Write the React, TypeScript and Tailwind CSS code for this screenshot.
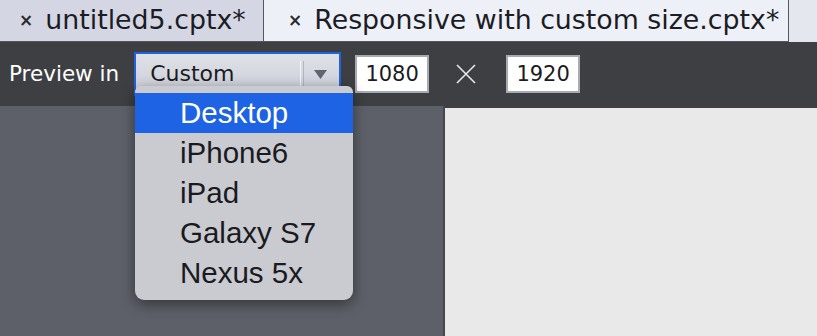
import { useState } from "react";

const DEVICES = ["Desktop", "iPhone6", "iPad", "Galaxy S7", "Nexus 5x"];

const ui = { fontFamily: '"DejaVu Sans", Verdana, sans-serif' };
const menuFont = { fontFamily: '"Liberation Sans", Arial, sans-serif' };

function Tab({ title, active, className }: { title: string; active?: boolean; className?: string }) {
  return (
    <div
      className={`flex items-center h-full border-b border-[#3a3b40] ${
        active ? "bg-[#eef0f7] border-r border-[#55575e]" : "bg-[#d4d7e3] border-r border-[#55575e]"
      } ${className ?? ""}`}
    >
      <span className="text-[17px] font-bold text-[#2a2a2a] leading-none mr-[12px]">×</span>
      <span className="text-[26.8px] leading-none text-[#1c1c24]">{title}</span>
    </div>
  );
}

export default function App() {
  const [selected] = useState(0);

  return (
    <div className="relative w-[817px] h-[336px] flex flex-col overflow-hidden bg-[#3e3f43]" style={ui}>
      {/* tab strip */}
      <div className="flex h-[42px] bg-[#e5e7ee]">
        <Tab title="untitled5.cptx*" className="w-[264px] pl-[19px]" />
        <Tab title="Responsive with custom size.cptx*" active className="w-[525px] pl-[24px]" />
        <div className="flex-1" />
      </div>

      {/* toolbar */}
      <div className="flex items-center h-[64px] bg-[#3e3f43] pl-[9px]">
        <span className="text-[21.5px] text-white leading-none">Preview in</span>
        <div className="ml-[15px] w-[207px] h-[44px] border-2 border-[#2262dc] bg-gradient-to-b from-[#dfe1e8] to-[#cbced7] flex items-center">
          <span className="ml-[14px] text-[22px] leading-none text-[#1b1b22]">Custom</span>
          <div className="ml-auto h-full flex items-center">
            <div className="w-[1px] h-[26px] bg-[#f3f4f7]" />
            <div className="w-[1px] h-[26px] bg-[#b3b6bf] ml-[2px]" />
            <svg width="13" height="9" viewBox="0 0 13 9" className="ml-[10px] mr-[12px]">
              <path d="M0 0 L13 0 L6.5 9 Z" fill="#5f6470" />
            </svg>
          </div>
        </div>
        <div className="ml-[14px] w-[74px] h-[38px] bg-white border-2 border-[#a9abb2] flex items-center justify-center">
          <span className="text-[21px] leading-none text-[#1b1b22]">1080</span>
        </div>
        <svg width="22" height="22" viewBox="0 0 22 22" className="ml-[26px]">
          <path d="M2 2 L20 20 M20 2 L2 20" stroke="#e8e8ea" strokeWidth="1.6" />
        </svg>
        <div className="ml-[29px] w-[74px] h-[38px] bg-white border-2 border-[#a9abb2] flex items-center justify-center">
          <span className="text-[21px] leading-none text-[#1b1b22]">1920</span>
        </div>
      </div>

      {/* panels */}
      <div className="flex flex-1">
        <div className="w-[443px] bg-[#5d6068]" />
        <div className="w-[2px] bg-[#46484e]" />
        <div className="flex-1 bg-[#e9e9e9] mt-[2px]" />
      </div>

      {/* open dropdown menu */}
      <div
        className="absolute left-[135px] top-[86px] w-[218px] h-[214px] bg-[#c9cbd0] rounded-t-[6px] rounded-b-[9px] shadow-[0_4px_14px_rgba(0,0,0,0.45)] pt-[7px]"
        style={menuFont}
      >
        {DEVICES.map((d, i) => (
          <div
            key={d}
            className={`h-[40px] flex items-center pl-[45px] text-[29.5px] leading-none ${
              i === selected ? "bg-[#1d63e3] text-white" : "text-[#1a1a1f]"
            }`}
          >
            {d}
          </div>
        ))}
      </div>
    </div>
  );
}
